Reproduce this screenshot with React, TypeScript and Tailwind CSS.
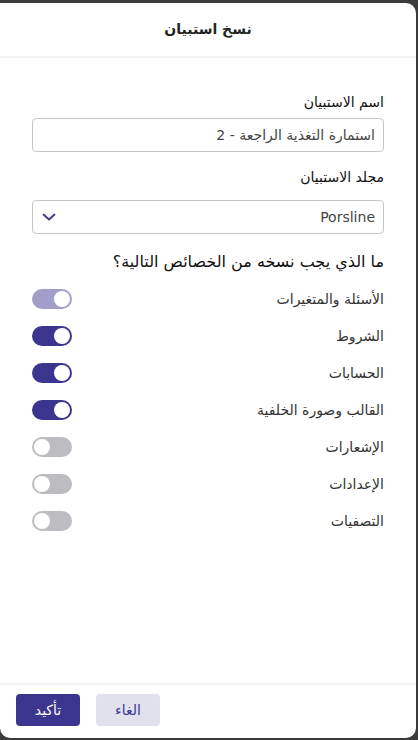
import React from "react";

type Item = { label: string; state: "on" | "off" | "locked" };

const items: Item[] = [
  { label: "الأسئلة والمتغيرات", state: "locked" },
  { label: "الشروط", state: "on" },
  { label: "الحسابات", state: "on" },
  { label: "القالب وصورة الخلفية", state: "on" },
  { label: "الإشعارات", state: "off" },
  { label: "الإعدادات", state: "off" },
  { label: "التصفيات", state: "off" },
];

const Toggle: React.FC<{ state: Item["state"] }> = ({ state }) => {
  const on = state !== "off";
  const bg =
    state === "on" ? "bg-[#3c3590]" : state === "locked" ? "bg-[#a19ec9]" : "bg-[#bdbdc1]";
  return (
    <div
      className={`flex h-5 w-10 items-center rounded-full p-0.5 ${bg} ${
        on ? "justify-start" : "justify-end"
      }`}
    >
      <div className="size-4 rounded-full bg-white" />
    </div>
  );
};

export default function App() {
  return (
    <div
      dir="rtl"
      className="h-[740px] w-[418px] bg-[#3b3b3b] pt-[3px] pb-[2px] pr-[2px]"
      style={{ fontFamily: '"DejaVu Sans", "Noto Sans", sans-serif' }}
    >
      <div className="flex h-full flex-col rounded-[10px] rounded-tl-none bg-white">
        <div className="flex h-[55px] items-center justify-center border-b-2 border-[#f0f0f5] text-[14px] font-bold text-[#222]">
          نسخ استبيان
        </div>

        <div className="flex flex-1 flex-col px-8 pt-[34px]">
          <label className="text-[14px] text-[#111]">اسم الاستبيان</label>
          <div className="mt-[5px] flex h-[34px] items-center rounded-[4px] border border-[#c4c4c4] px-2 text-[14px] text-[#444]">
            استمارة التغذية الراجعة - 2
          </div>

          <label className="mt-[15px] text-[14px] text-[#111]">مجلد الاستبيان</label>
          <div className="mt-[12px] flex h-[34px] items-center justify-between rounded-[4px] border border-[#c4c4c4] px-2 text-[14px] text-[#444]">
            <span>Porsline</span>
            <svg width="16" height="16" viewBox="0 0 16 16" fill="none" stroke="#3c3590" strokeWidth="1.8" strokeLinecap="round" strokeLinejoin="round">
              <path d="M2.5 5.5l5.5 5 5.5-5" />
            </svg>
          </div>

          <div className="mt-[16px] text-[16px] text-[#111]">ما الذي يجب نسخه من الخصائص التالية؟</div>

          <div className="mt-[15px] flex flex-col gap-[17px]">
            {items.map((it) => (
              <div key={it.label} className="flex h-5 items-center justify-between">
                <span className="text-[14px] text-[#333]">{it.label}</span>
                <Toggle state={it.state} />
              </div>
            ))}
          </div>
        </div>

        <div className="flex h-[55px] items-center gap-4 border-t-2 border-[#f0f0f5] px-4 pb-[3px]" dir="ltr">
          <button className="h-8 w-16 rounded-[4px] bg-[#3c3590] text-[14px] text-white">تأكيد</button>
          <button className="h-8 w-16 rounded-[4px] bg-[#e1e1ee] text-[14px] text-[#3c3590]">الغاء</button>
        </div>
      </div>
    </div>
  );
}
